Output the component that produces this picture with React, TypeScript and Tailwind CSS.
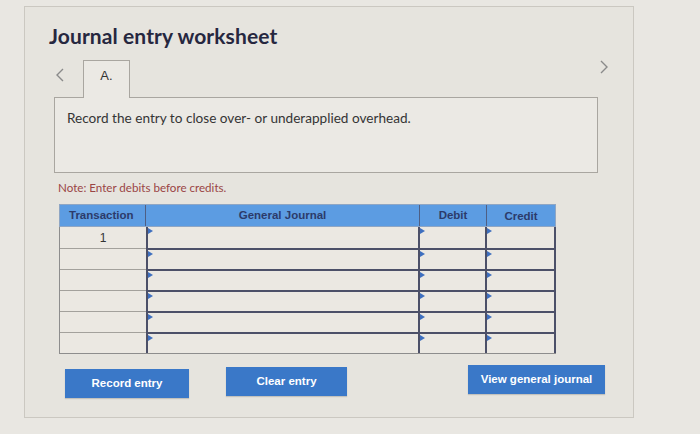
const rows = ['1', '', '', '', '', ''];

function Flag() {
  return (
    <span className="absolute left-0 top-[1px] w-0 h-0 border-t-[3px] border-b-[3px] border-l-[5px] border-t-transparent border-b-transparent border-l-[#3e6fbf]" />
  );
}

function Chevron({ dir }: { dir: 'left' | 'right' }) {
  return (
    <svg width="10" height="14" viewBox="0 0 10 14" fill="none">
      <polyline
        points={dir === 'left' ? '8,1 2,7 8,13' : '2,1 8,7 2,13'}
        stroke="#8a8a8a"
        strokeWidth="1.4"
      />
    </svg>
  );
}

export default function App() {
  return (
    <div className="w-[700px] h-[434px] bg-[#e9e7e2] pt-[6px] pl-[24px] overflow-hidden" style={{ fontFamily: 'Lato, "Open Sans", sans-serif' }}>
      <div className="relative w-[610px] h-[412px] border border-[#cbc8c1] bg-[#e6e4de] pl-[24px]">
        {/* Title */}
        <h1 className="mt-[15px] text-[21px] leading-[28px] font-bold text-[#26273f] tracking-[0.1px]">
          Journal entry worksheet
        </h1>

        {/* Tabs */}
        <div className="relative mt-[10px] ml-[5px] flex items-start">
          <div className="ml-[1px] mt-[8px] w-[10px]">
            <Chevron dir="left" />
          </div>
          <div className="relative z-10 ml-[18px] w-[47px] h-[38px] -mb-px border-l border-t border-r border-[#a9a6a0] bg-[#ebe9e4] flex justify-center pt-[7px]">
            <span className="text-[13px] leading-[16px] text-[#333] font-['Liberation_Sans',sans-serif]">A.</span>
          </div>
          <div className="absolute left-[545px] top-[0px]">
            <Chevron dir="right" />
          </div>
        </div>

        {/* Instruction box */}
        <div className="ml-[5px] w-[544px] h-[76px] border border-[#a9a6a0] bg-[#ebe9e4] pl-[12px] pt-[11px]">
          <p className="text-[13.6px] leading-[18px] text-[#353535]">
            Record the entry to close over- or underapplied overhead.
          </p>
        </div>

        <p className="mt-[8px] ml-[9px] text-[11.6px] leading-[14px] text-[#9a4545]">
          Note: Enter debits before credits.
        </p>

        {/* Table */}
        <div className="mt-[9px] ml-[10px] w-[497px] font-['Liberation_Sans',Arial,sans-serif]">
          <div className="flex h-[23px] bg-[#5c9ce2] border border-[#8fa6c4] text-[11.5px] font-bold text-[#2c3b6a]">
            <div className="w-[86px] flex items-center pl-[9px] border-r border-[#4e5f84]">Transaction</div>
            <div className="w-[274px] flex items-center justify-center border-r border-[#4e5f84]">General Journal</div>
            <div className="w-[67px] flex items-center justify-center border-r border-[#4e5f84]">Debit</div>
            <div className="flex-1 flex items-start justify-center pt-[3px]">Credit</div>
          </div>
          <div className="border-l border-b border-[#8d8d8d] bg-[#ebe8e2]">
            {rows.map((r, i) => (
              <div key={i} className="flex h-[21px]">
                <div className={`w-[86px] flex items-center justify-center text-[12px] text-[#333] ${i > 0 ? 'border-t border-[#a3a19c]' : ''}`}>
                  {r}
                </div>
                <div className={`relative w-[274px] border-l-2 border-r-2 border-[#4c5068] ${i > 0 ? 'border-t-2' : ''}`}>
                  <Flag />
                </div>
                <div className={`relative w-[67px] border-r-2 border-[#4c5068] ${i > 0 ? 'border-t-2' : ''}`}>
                  <Flag />
                </div>
                <div className={`relative flex-1 border-r-2 border-[#4c5068] ${i > 0 ? 'border-t-2' : ''}`}>
                  <Flag />
                </div>
              </div>
            ))}
          </div>
        </div>

        {/* Buttons */}
        <div className="mt-[13px] ml-[16px] flex items-start font-['Liberation_Sans',Arial,sans-serif] text-[11.5px] font-bold text-white">
          <button className="w-[124px] h-[29px] mt-[2px] bg-[#3a78c8] shadow-[0_1px_1px_rgba(0,0,0,0.15)]">Record entry</button>
          <button className="ml-[37px] w-[121px] h-[29px] bg-[#3a78c8] shadow-[0_1px_1px_rgba(0,0,0,0.15)]">Clear entry</button>
          <button className="ml-[121px] -mt-[2px] w-[137px] h-[29px] bg-[#3a78c8] shadow-[0_1px_1px_rgba(0,0,0,0.15)]">View general journal</button>
        </div>
      </div>
    </div>
  );
}
